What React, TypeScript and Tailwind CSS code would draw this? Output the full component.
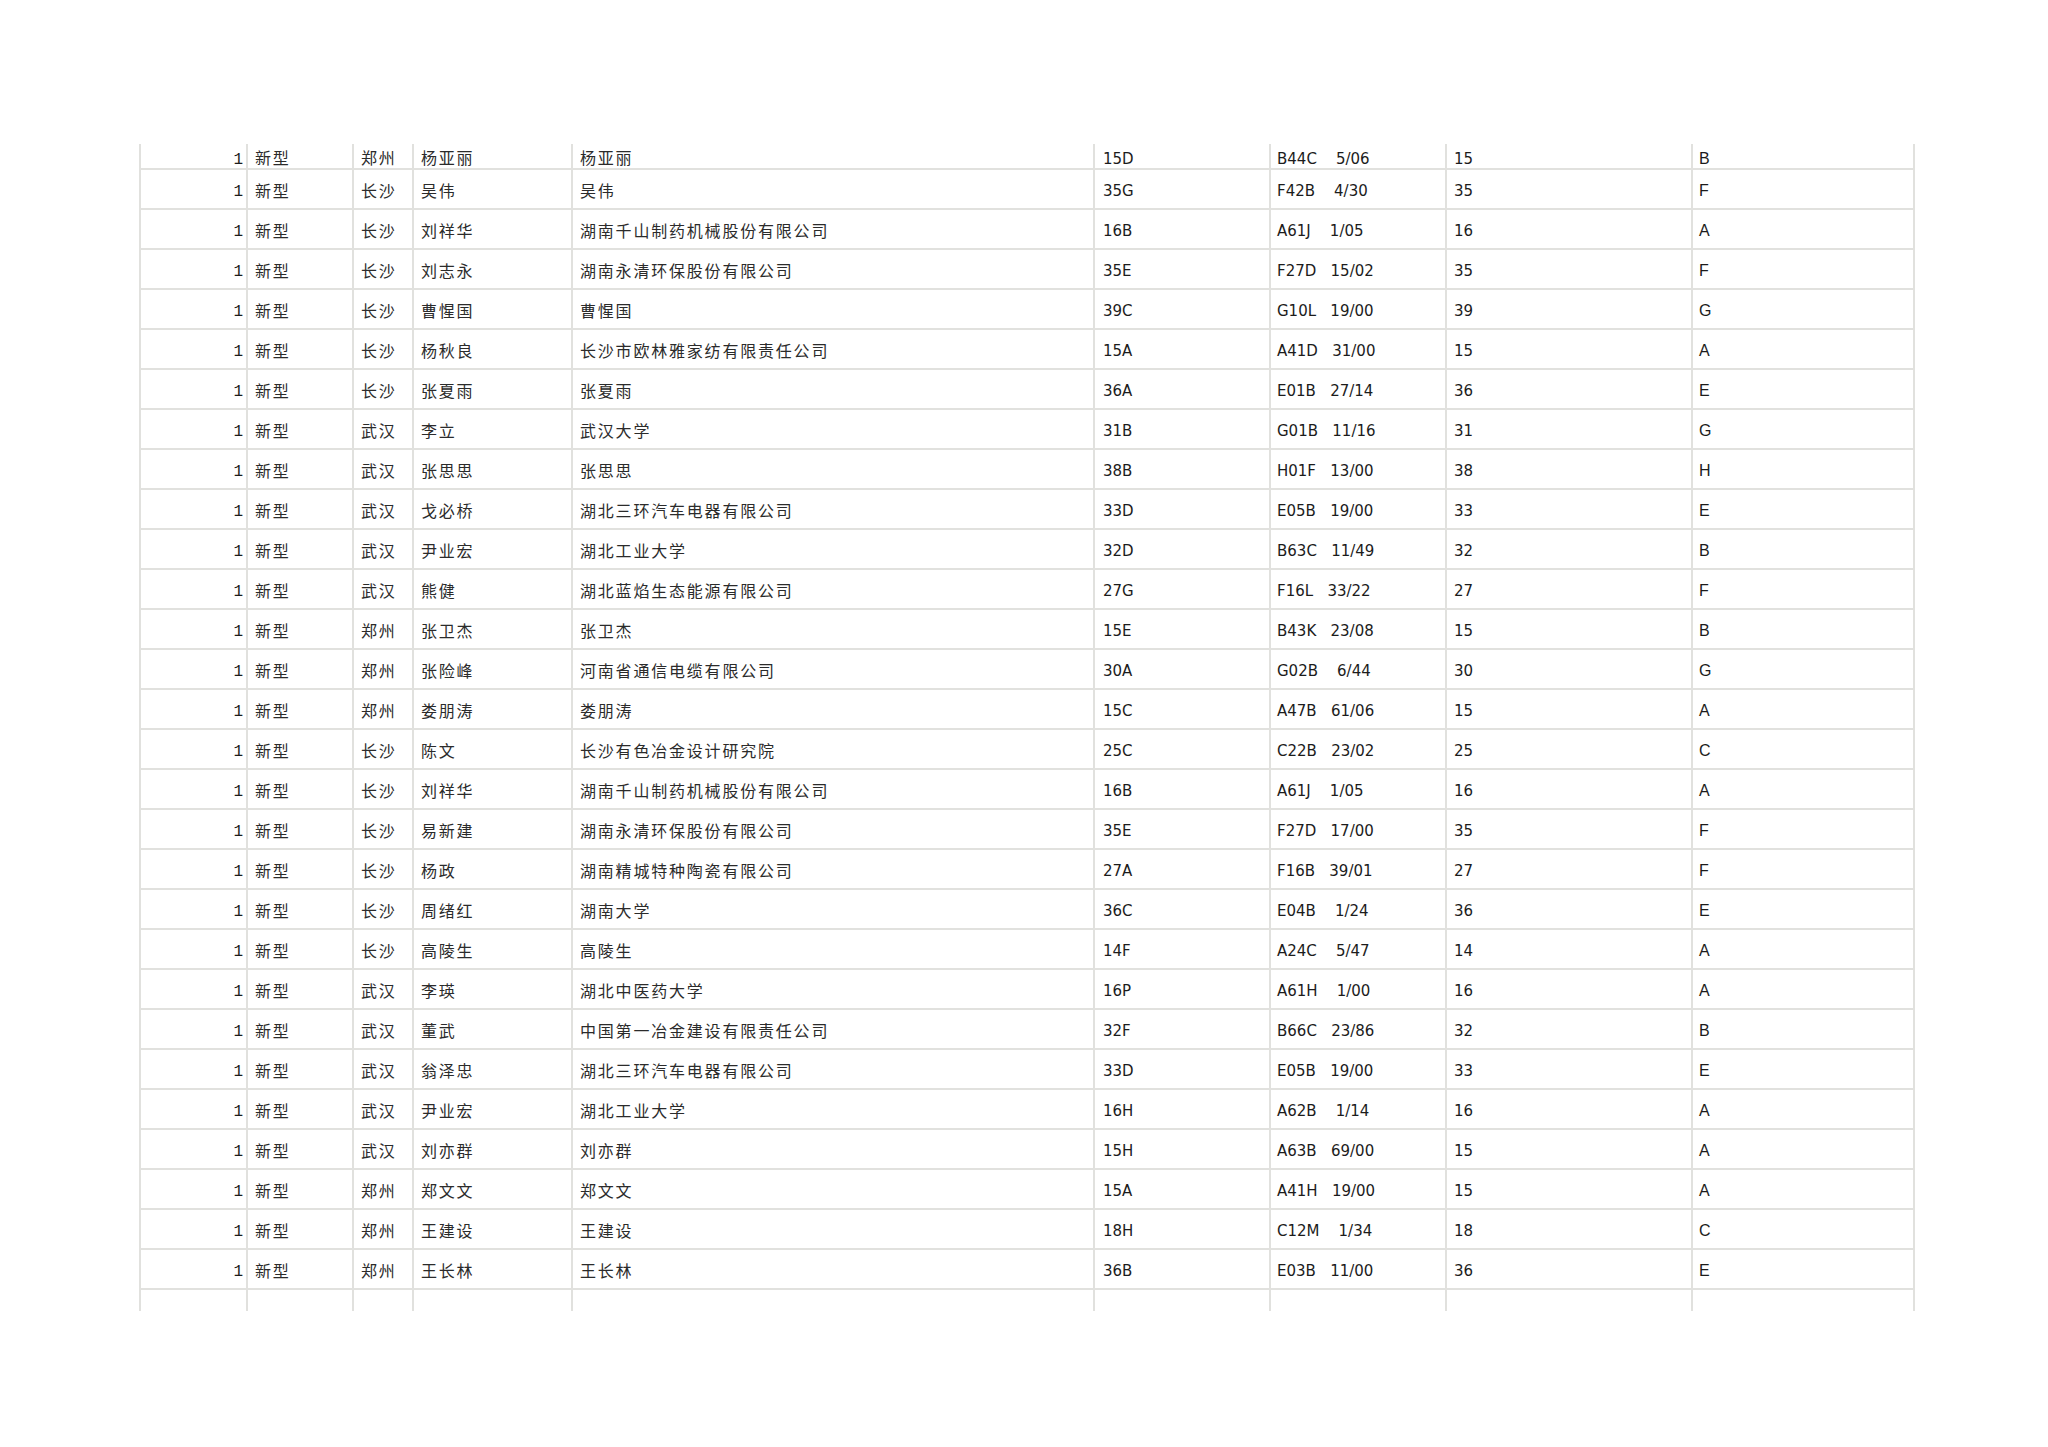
const rows: string[][] = [
  ["新型", "郑州", "杨亚丽", "杨亚丽", "15D", "B44C    5/06", "15", "B"],
  ["新型", "长沙", "吴伟", "吴伟", "35G", "F42B    4/30", "35", "F"],
  ["新型", "长沙", "刘祥华", "湖南千山制药机械股份有限公司", "16B", "A61J    1/05", "16", "A"],
  ["新型", "长沙", "刘志永", "湖南永清环保股份有限公司", "35E", "F27D   15/02", "35", "F"],
  ["新型", "长沙", "曹惺国", "曹惺国", "39C", "G10L   19/00", "39", "G"],
  ["新型", "长沙", "杨秋良", "长沙市欧林雅家纺有限责任公司", "15A", "A41D   31/00", "15", "A"],
  ["新型", "长沙", "张夏雨", "张夏雨", "36A", "E01B   27/14", "36", "E"],
  ["新型", "武汉", "李立", "武汉大学", "31B", "G01B   11/16", "31", "G"],
  ["新型", "武汉", "张思思", "张思思", "38B", "H01F   13/00", "38", "H"],
  ["新型", "武汉", "戈必桥", "湖北三环汽车电器有限公司", "33D", "E05B   19/00", "33", "E"],
  ["新型", "武汉", "尹业宏", "湖北工业大学", "32D", "B63C   11/49", "32", "B"],
  ["新型", "武汉", "熊健", "湖北蓝焰生态能源有限公司", "27G", "F16L   33/22", "27", "F"],
  ["新型", "郑州", "张卫杰", "张卫杰", "15E", "B43K   23/08", "15", "B"],
  ["新型", "郑州", "张险峰", "河南省通信电缆有限公司", "30A", "G02B    6/44", "30", "G"],
  ["新型", "郑州", "娄朋涛", "娄朋涛", "15C", "A47B   61/06", "15", "A"],
  ["新型", "长沙", "陈文", "长沙有色冶金设计研究院", "25C", "C22B   23/02", "25", "C"],
  ["新型", "长沙", "刘祥华", "湖南千山制药机械股份有限公司", "16B", "A61J    1/05", "16", "A"],
  ["新型", "长沙", "易新建", "湖南永清环保股份有限公司", "35E", "F27D   17/00", "35", "F"],
  ["新型", "长沙", "杨政", "湖南精城特种陶瓷有限公司", "27A", "F16B   39/01", "27", "F"],
  ["新型", "长沙", "周绪红", "湖南大学", "36C", "E04B    1/24", "36", "E"],
  ["新型", "长沙", "高陵生", "高陵生", "14F", "A24C    5/47", "14", "A"],
  ["新型", "武汉", "李瑛", "湖北中医药大学", "16P", "A61H    1/00", "16", "A"],
  ["新型", "武汉", "董武", "中国第一冶金建设有限责任公司", "32F", "B66C   23/86", "32", "B"],
  ["新型", "武汉", "翁泽忠", "湖北三环汽车电器有限公司", "33D", "E05B   19/00", "33", "E"],
  ["新型", "武汉", "尹业宏", "湖北工业大学", "16H", "A62B    1/14", "16", "A"],
  ["新型", "武汉", "刘亦群", "刘亦群", "15H", "A63B   69/00", "15", "A"],
  ["新型", "郑州", "郑文文", "郑文文", "15A", "A41H   19/00", "15", "A"],
  ["新型", "郑州", "王建设", "王建设", "18H", "C12M    1/34", "18", "C"],
  ["新型", "郑州", "王长林", "王长林", "36B", "E03B   11/00", "36", "E"],
];

const grid =
  "grid grid-cols-[107px_106px_60px_159px_522px_176px_176px_246px_224px]";
const cell =
  "flex items-center border-l-2 border-b-2 border-[#e1e1de] overflow-hidden whitespace-pre";
const cjk =
  "font-['Noto_Sans_CJK_SC',sans-serif] text-[16px] tracking-[1.8px] pl-[7px] text-[#2b2b2b]";
const latin = "font-['DejaVu_Sans',sans-serif] text-[15px]";

function Row({ data, first }: { data: string[]; first: boolean }) {
  const h = first ? "h-[26px]" : "h-[40px]";
  const cjkCell = `${cell} ${h} ${cjk} ${first ? "pt-[2px]" : "pt-[1px]"}`;
  const latinCell = `${cell} ${h} ${latin} ${first ? "pt-[6px]" : "pt-[4px]"}`;
  return (
    <div className={grid}>
      <div
        className={`${cell} ${h} ${first ? "pt-[8px]" : "pt-[6px]"} justify-end pr-[3px] font-['Liberation_Mono',monospace] text-[16px]`}
      >
        1
      </div>
      <div className={cjkCell}>{data[0]}</div>
      <div className={cjkCell}>{data[1]}</div>
      <div className={cjkCell}>{data[2]}</div>
      <div className={cjkCell}>{data[3]}</div>
      <div className={`${latinCell} pl-[8px]`}>{data[4]}</div>
      <div className={`${latinCell} pl-[6px]`}>{data[5]}</div>
      <div className={`${latinCell} pl-[7px]`}>{data[6]}</div>
      <div
        className={`${cell} ${h} ${first ? "pt-[6px]" : "pt-[4px]"} border-r-2 pl-[6px] font-['Liberation_Sans',sans-serif] text-[16px]`}
      >
        {data[7]}
      </div>
    </div>
  );
}

export default function App() {
  return (
    <div className="w-[2048px] h-[1447px] bg-white text-[#1c1c1c]">
      <div className="pl-[139px] pt-[144px]">
        {rows.map((r, i) => (
          <Row key={i} data={r} first={i === 0} />
        ))}
        <div className={grid}>
          {Array.from({ length: 9 }).map((_, i) => (
            <div
              key={i}
              className={`h-[21px] border-l-2 border-[#e1e1de] ${i === 8 ? "border-r-2" : ""}`}
            />
          ))}
        </div>
      </div>
    </div>
  );
}
